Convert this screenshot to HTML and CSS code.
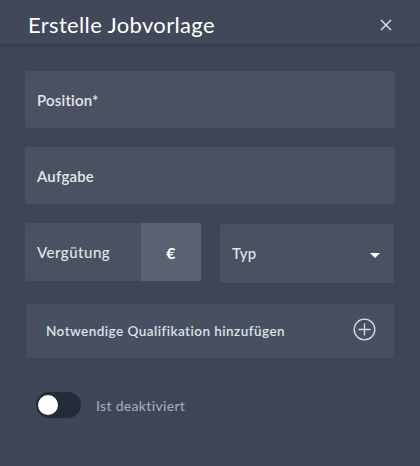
FILE: index.html
```html
<!DOCTYPE html>
<html lang="de">
<head>
<meta charset="utf-8">
<link rel="stylesheet" href="styles.css">
</head>
<body>
<div class="dialog">
  <header class="head">
    <h1 class="title">Erstelle Jobvorlage</h1>
    <svg class="close" width="12" height="12" viewBox="0 0 12 12"><path d="M1 1L11 11M11 1L1 11" stroke="#e6e8ec" stroke-width="1.4" fill="none"/></svg>
  </header>
  <main class="body">
    <div class="field"><span class="label">Position*</span></div>
    <div class="field"><span class="label">Aufgabe</span></div>
    <div class="row">
      <div class="field money">
        <span class="label">Vergütung</span>
        <span class="cur">€</span>
      </div>
      <div class="field select">
        <span class="label">Typ</span>
        <svg class="caret" width="10" height="5" viewBox="0 0 10 5"><path d="M0 0H10L5 5Z" fill="#ffffff"/></svg>
      </div>
    </div>
    <div class="qual">
      <span class="qlabel">Notwendige Qualifikation hinzufügen</span>
      <svg class="plus" width="23" height="23" viewBox="0 0 23 23"><circle cx="11.5" cy="11.5" r="10.3" stroke="#d8dbe0" stroke-width="1.3" fill="none"/><path d="M11.5 5.5V17.5M5.5 11.5H17.5" stroke="#d8dbe0" stroke-width="1.3"/></svg>
    </div>
    <div class="toggle-row">
      <span class="toggle"><span class="knob"></span></span>
      <span class="tlabel">Ist deaktiviert</span>
    </div>
  </main>
</div>
</body>
</html>
```
FILE: styles.css
```css
* { box-sizing: border-box; }
html, body { margin: 0; padding: 0; }
body {
  width: 420px;
  height: 466px;
  background: #3d4556;
  font-family: Lato, "Noto Sans", sans-serif;
  color: #e3e6ea;
  overflow: hidden;
}
.dialog { display: flex; flex-direction: column; }
.head {
  height: 44px;
  background: #404859;
  display: flex;
  align-items: center;
  justify-content: space-between;
  padding: 0 28px 0 28px;
  box-shadow: 0 1px 3px rgba(0,0,0,0.18);
  position: relative;
}
.title {
  margin: 0;
  font-size: 22px;
  font-weight: 400;
  color: #ffffff;
  letter-spacing: 0.35px;
  padding-top: 5px;
}
.close { margin-top: 6px; }
.body {
  padding: 27px 25px 0 25px;
  display: flex;
  flex-direction: column;
}
.field {
  height: 57px;
  background: #4a5261;
  border-radius: 3px;
  display: flex;
  align-items: center;
  padding: 0 12px;
  margin-bottom: 19px;
}
.label {
  font-size: 15px;
  font-weight: 600;
  color: #e3e6ea;
  letter-spacing: 0.2px;
}
.row {
  display: flex;
  gap: 19px;
}
.money {
  width: 176px;
  padding: 0 0 0 12px;
  overflow: hidden;
  height: 58px;
}
.money .label { flex: 1; font-weight: 500; letter-spacing: 0.5px; }
.cur {
  width: 60px;
  height: 100%;
  background: #5a6272;
  display: flex;
  align-items: center;
  justify-content: center;
  font-weight: 700;
  font-size: 16px;
  color: #ffffff;
}
.select {
  flex: 1;
  margin-top: 1px;
  height: 59px;
  justify-content: space-between;
  padding: 0 14px 0 12px;
  margin-right: 1px;
}
.select .label { font-weight: 500; margin-top: -2px; }
.caret { margin-top: 4px; }
.qual {
  margin: 2px 1px 0 1px;
  height: 54px;
  background: #465061;
  display: flex;
  align-items: center;
  justify-content: space-between;
  padding: 0 18px 0 20px;
}
.qlabel {
  font-size: 13.5px;
  font-weight: 600;
  color: #dde0e5;
  letter-spacing: 0.45px;
}
.plus { margin-top: -3px; }
.toggle-row {
  display: flex;
  align-items: center;
  margin-top: 34px;
  padding-left: 11px;
}
.toggle {
  width: 45px;
  height: 26px;
  border-radius: 13px;
  background: #262c37;
  display: flex;
  align-items: center;
  padding-left: 2px;
}
.knob {
  width: 20px;
  height: 20px;
  border-radius: 50%;
  background: #ffffff;
}
.tlabel {
  margin-left: 15px;
  font-size: 14px;
  color: #a3a9b4;
  font-weight: 500;
  letter-spacing: 0.3px;
}
```
